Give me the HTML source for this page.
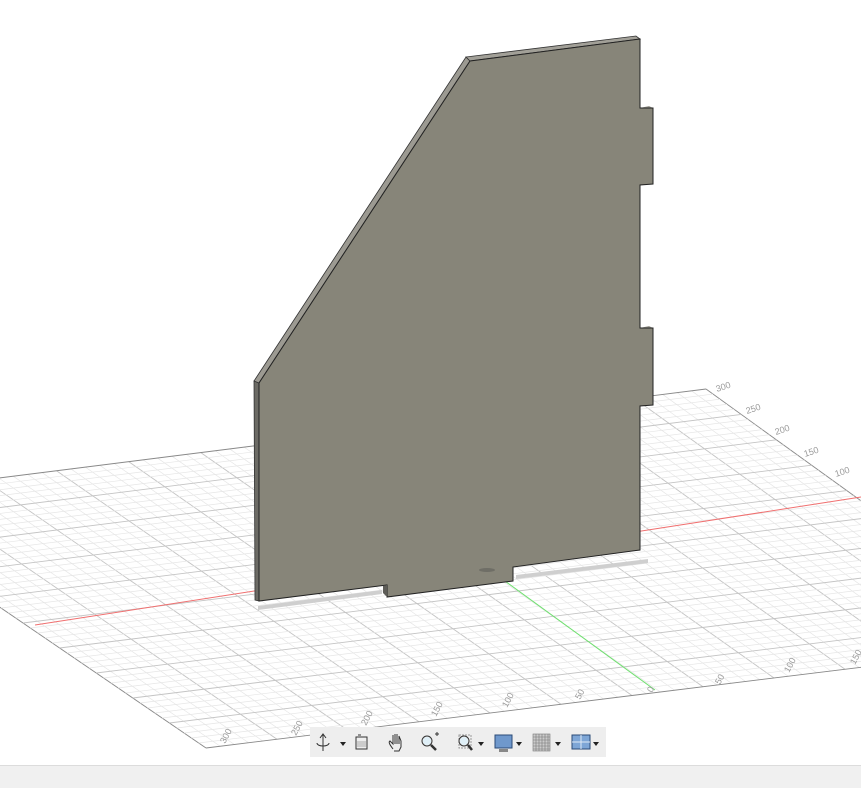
<!DOCTYPE html>
<html><head><meta charset="utf-8"><style>
html,body{margin:0;padding:0;background:#fff;width:861px;height:787px;overflow:hidden;font-family:"Liberation Sans",sans-serif}
#bar{position:absolute;left:0;top:765px;width:861px;height:22px;background:#f0f0f0;border-top:1px solid #dcdcdc}
#tb{position:absolute;left:310px;top:727px;width:296px;height:30px;background:#eeeeee}
.lbl{font-size:9px;fill:#9a9a9a;font-family:"Liberation Sans",sans-serif}
</style></head><body>
<svg id="s" width="861" height="787" style="position:absolute;left:0;top:0">
<g id="grid"></g>
<line x1="35" y1="625" x2="861" y2="497" stroke="#f07070" stroke-width="1"/>
<line x1="487" y1="568" x2="655" y2="690" stroke="#6fe06f" stroke-width="1"/>
<!-- shadows -->
<polygon points="258,606 382,590 382,594 258,610" fill="#cfcfcf"/>
<polygon points="516,575 648,559 648,563 516,579" fill="#cfcfcf"/>
<!-- side strip -->
<polygon points="254,381 259,383 259,601 255,600" fill="#6c6b65" stroke="#333" stroke-width="0.8"/>
<!-- top bevel strips -->
<polygon points="254,381 466,57 470,61 259,383" fill="#9c9a92" stroke="#333" stroke-width="0.8"/>
<polygon points="466,57 636,36 640,39 470,61" fill="#a2a098" stroke="#333" stroke-width="0.8"/>
<polygon points="640,108 649,106 653,108 640,110" fill="#9c9a92"/>
<polygon points="640,328 649,326 653,328 640,330" fill="#9c9a92"/>
<!-- face -->
<polygon points="259,383 470,61 640,39 640,108 653,108 653,184 640,185 640,328 653,328 653,405 640,406 640,550 513,567 513,581 387,597 387,585 259,601" fill="#878579" stroke="#222" stroke-width="1"/>
<polygon points="383,586 387,585 387,597 383,593" fill="#5e5d58"/>
<ellipse cx="487" cy="570" rx="8" ry="2" fill="#6f6e66"/>
<g id="labels">
<text class="lbl" transform="translate(225,744) rotate(-62)">300</text>
<text class="lbl" transform="translate(296,736) rotate(-62)">250</text>
<text class="lbl" transform="translate(366,726) rotate(-62)">200</text>
<text class="lbl" transform="translate(436,717) rotate(-62)">150</text>
<text class="lbl" transform="translate(507,708) rotate(-62)">100</text>
<text class="lbl" transform="translate(580,700) rotate(-62)">50</text>
<text class="lbl" transform="translate(652,693) rotate(-62)">0</text>
<text class="lbl" transform="translate(720,685) rotate(-62)">50</text>
<text class="lbl" transform="translate(789,673) rotate(-62)">100</text>
<text class="lbl" transform="translate(855,665) rotate(-62)">150</text>
<text class="lbl" transform="translate(717,392) rotate(-18)">300</text>
<text class="lbl" transform="translate(747,414) rotate(-18)">250</text>
<text class="lbl" transform="translate(776,435) rotate(-18)">200</text>
<text class="lbl" transform="translate(805,457) rotate(-18)">150</text>
<text class="lbl" transform="translate(836,477) rotate(-18)">100</text>
</g>
</svg>
<div id="tb">
<svg width="296" height="30" style="position:absolute;left:0;top:0">
<g fill="none" stroke="#333" stroke-width="1">
<path d="M13,8 L13,24 M10,11 L13,7 L16,11 M7,16 C7,20 19,20 19,16"/>
<path d="M46,10 L57,10 L57,22 L46,22 Z M48,8 L51,8"/>
<rect x="47" y="14" width="9" height="6" fill="#ccc" stroke="none"/>
<path d="M83,22 C80,18 78,15 80,14 L83,17 L83,8 M85,17 L85,7 M87,17 L87,7 M89,17 L89,9 L91,14 L91,20 L89,24 L84,24"/>
<circle cx="117" cy="14" r="5"/><path d="M121,18 L126,23" stroke-width="2.5"/><path d="M125,7 L129,7 M127,5 L127,9"/>
<rect x="149" y="8" width="12" height="13" stroke="#999" stroke-dasharray="2,1"/>
<circle cx="154" cy="14" r="5"/><path d="M158,18 L162,23" stroke-width="2.5"/>
</g>
<circle cx="117" cy="14" r="4" fill="#dfeff7"/><circle cx="154" cy="14" r="4" fill="#dfeff7"/>
<rect x="185" y="8" width="17" height="13" fill="#6f98cc" stroke="#2b4a77"/>
<path d="M189,22 L198,22 L198,25 L189,25 Z" fill="#888"/>
<g stroke="#777" stroke-width="0.6">
<rect x="223" y="7" width="17" height="17" fill="#ccc"/>
<path d="M226,7V24M229,7V24M232,7V24M235,7V24M238,7V24M223,10H240M223,13H240M223,16H240M223,19H240M223,22H240"/>
</g>
<rect x="262" y="8" width="18" height="14" fill="#7ea6d6" stroke="#2b4a77"/>
<path d="M271,8V22M262,15H280" stroke="#dfe9f5"/>
<g fill="#222">
<path d="M30,15 L36,15 L33,19Z"/><path d="M168,15 L174,15 L171,19Z"/><path d="M206,15 L212,15 L209,19Z"/><path d="M245,15 L251,15 L248,19Z"/><path d="M283,15 L289,15 L286,19Z"/>
</g>
</svg>
</div>
<div id="bar"></div>
<script>
(function(){
var BL=[-160,498],BR=[706,389],FR=[1058,643],FL=[206,748];
function lerp(a,b,t){return [a[0]+(b[0]-a[0])*t,a[1]+(b[1]-a[1])*t];}
var g=document.getElementById('grid'),h='';
var N=60,M=50;
for(var i=0;i<=N;i++){var t=i/N;var p=lerp(BL,BR,t),q=lerp(FL,FR,t);var maj=i%5==0;
h+='<line x1="'+p[0]+'" y1="'+p[1]+'" x2="'+q[0]+'" y2="'+q[1]+'" stroke="'+(i==0||i==N?'#888':(maj?'#c4c4c4':'#e6e6e6'))+'" stroke-width="'+(maj?0.9:0.7)+'"/>';}
for(var j=0;j<=M;j++){var t=j/M;var p=lerp(BL,FL,t),q=lerp(BR,FR,t);var maj=j%5==0;
h+='<line x1="'+p[0]+'" y1="'+p[1]+'" x2="'+q[0]+'" y2="'+q[1]+'" stroke="'+(j==0||j==M?'#888':(maj?'#c4c4c4':'#e6e6e6'))+'" stroke-width="'+(maj?0.9:0.7)+'"/>';}
g.innerHTML=h;
})();
</script>
</body></html>
